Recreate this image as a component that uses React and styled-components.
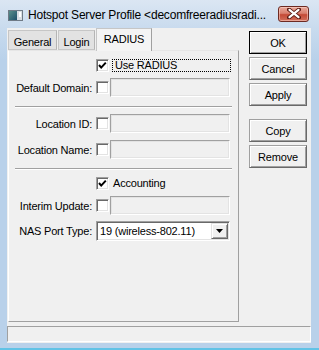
import React from "react";
import styled, { createGlobalStyle } from "styled-components";

const Global = createGlobalStyle`
  html, body { margin: 0; padding: 0; background: #fff; }
  body { font-family: "Liberation Sans", Arial, sans-serif; font-size: 11px; color: #000; }
`;

const UiFont = `"Liberation Sans", Arial, sans-serif`;

const Window = styled.div`
  width: 319px;
  height: 350px;
  box-sizing: border-box;
  display: flex;
  flex-direction: column;
  background: linear-gradient(#dbe6f3 0px, #c9dbee 28px, #b9d1ea 60px, #b9d1ea);
  border-bottom: 2px solid #62c3e6;
  font-family: ${UiFont};
`;

const TitleBar = styled.div`
  height: 28px;
  flex: none;
  display: flex;
  align-items: center;
  padding: 2px 10px 0 8px;
  box-sizing: border-box;
`;

const Title = styled.span`
  margin-left: 5px;
  font-size: 12px;
  letter-spacing: -0.2px;
  white-space: nowrap;
  flex: 1;
  overflow: hidden;
`;

const CloseButton = styled.div`
  width: 31px;
  height: 16px;
  flex: none;
  margin-top: -3px;
  box-sizing: border-box;
  border: 1px solid #6d2a22;
  border-radius: 3px;
  display: flex;
  align-items: center;
  justify-content: center;
  background: linear-gradient(#e9a99b 0%, #d9806f 45%, #c44a36 55%, #d2705c 100%);
  box-shadow: inset 0 0 0 1px rgba(255, 220, 210, 0.5);
`;

const Client = styled.div`
  height: 315px;
  margin: 0 8px 0 7px;
  background: #f0f0f0;
  display: flex;
  flex-direction: column;
`;

const Body = styled.div`
  height: 294px;
  display: flex;
  padding-left: 1px;
`;

const TabArea = styled.div`
  width: 231px;
  display: flex;
  flex-direction: column;
`;

const TabStrip = styled.div`
  height: 22px;
  display: flex;
  align-items: flex-end;
  position: relative;
  z-index: 1;
`;

const Tab = styled.div`
  width: ${({ $w }) => $w}px;
  height: ${({ $active }) => ($active ? 23 : 20)}px;
  margin-bottom: ${({ $active }) => ($active ? -1 : 0)}px;
  margin-right: 1px;
  box-sizing: border-box;
  border: 1px solid #c6c6c6;
  border-right-color: ${({ $active }) => ($active ? "#a0a0a0" : "#b5b5b5")};
  border-bottom: ${({ $active }) => ($active ? "none" : "1px solid #c6c6c6")};
  background: ${({ $active }) => ($active ? "#f4f4f4" : "#e2e2e2")};
  display: flex;
  justify-content: center;
  padding-top: ${({ $active }) => ($active ? 4 : 5)}px;
  font-size: 11px;
  line-height: 12px;
  letter-spacing: -0.2px;
`;

const Panel = styled.div`
  height: 272px;
  box-sizing: border-box;
  border: 1px solid #fff;
  border-right-color: #a0a0a0;
  border-bottom-color: #a0a0a0;
  border-top-color: #e6e6e6;
  display: flex;
  flex-direction: column;
`;

const Row = styled.div`
  height: ${({ $h }) => $h}px;
  margin-top: ${({ $mt }) => $mt}px;
  display: flex;
  align-items: center;
`;

const Label = styled.div`
  width: 83px;
  flex: none;
  text-align: right;
  font-size: 11px;
  letter-spacing: -0.2px;
  white-space: nowrap;
`;

const CheckBox = styled.div`
  width: 13px;
  height: 13px;
  flex: none;
  margin-left: 4px;
  box-sizing: border-box;
  background: #fff;
  border: 1px solid;
  border-color: #a0a0a0 #fff #fff #a0a0a0;
  box-shadow: inset 1px 1px #696969, inset -1px -1px #e3e3e3;
  display: flex;
  align-items: center;
  justify-content: center;
`;

const FocusLabel = styled.div`
  margin-left: 3px;
  width: 119px;
  height: 13px;
  box-sizing: border-box;
  border: 1px dotted #000;
  padding-left: 2px;
  font-size: 11px;
  line-height: 11px;
  letter-spacing: -0.2px;
`;

const CheckText = styled.div`
  margin-left: 4px;
  font-size: 11px;
  letter-spacing: -0.2px;
`;

const Field = styled.div`
  margin-left: 1px;
  width: 120px;
  height: 19px;
  box-sizing: border-box;
  background: #f0f0f0;
  border: 1px solid;
  border-color: #a0a0a0 #fff #fff #a0a0a0;
  box-shadow: inset 1px 1px #e3e3e3, inset -1px -1px #e3e3e3;
`;

const Separator = styled.div`
  margin: ${({ $mt }) => $mt}px 6px 0 6px;
  height: 0;
  border-top: 1px solid #a0a0a0;
  border-bottom: 1px solid #fff;
`;

const Combo = styled.div`
  margin-left: 4px;
  width: 134px;
  height: 20px;
  box-sizing: border-box;
  background: #fff;
  border: 1px solid;
  border-color: #a0a0a0 #fff #fff #a0a0a0;
  box-shadow: inset 1px 1px #696969, inset -1px -1px #e3e3e3;
  display: flex;
  align-items: center;
  padding: 2px 1px 2px 3px;
`;

const ComboText = styled.span`
  flex: 1;
  font-size: 11px;
  letter-spacing: -0.2px;
  white-space: nowrap;
`;

const ComboButton = styled.div`
  width: 17px;
  height: 16px;
  box-sizing: border-box;
  background: #f0f0f0;
  border: 1px solid;
  border-color: #e3e3e3 #696969 #696969 #e3e3e3;
  box-shadow: inset 1px 1px #fff, inset -1px -1px #a0a0a0;
  display: flex;
  align-items: center;
  justify-content: center;
`;

const ButtonColumn = styled.div`
  margin-left: 10px;
  padding-top: 3px;
  display: flex;
  flex-direction: column;
  gap: 3px;
`;

const Button = styled.div`
  width: 58px;
  height: 23px;
  margin-top: ${({ $mt }) => $mt || 0}px;
  box-sizing: border-box;
  background: #f0f0f0;
  border: 1px solid;
  border-color: ${({ $default }) =>
    $default ? "#000" : "#a0a0a0 #696969 #696969 #a0a0a0"};
  box-shadow: inset 1px 1px #fff, inset -1px -1px #a0a0a0;
  display: flex;
  align-items: center;
  justify-content: center;
  font-size: 11px;
  letter-spacing: -0.2px;
`;

const StatusBar = styled.div`
  margin-top: 4px;
  height: 16px;
  box-sizing: border-box;
  border: 1px solid;
  border-color: #a0a0a0 #fff #fff #a0a0a0;
`;

const Check = ({ checked }) => (
  <CheckBox>
    {checked && (
      <svg width="11" height="11" viewBox="0 0 11 11">
        <polyline points="2,5 4.2,7.6 8.8,2.6" fill="none" stroke="#000" strokeWidth="2" />
      </svg>
    )}
  </CheckBox>
);

const WindowIcon = () => (
  <svg width="15" height="11" viewBox="0 0 15 11">
    <defs>
      <linearGradient id="ig" x1="0" y1="0" x2="1" y2="1">
        <stop offset="0" stopColor="#5a8f8a" />
        <stop offset="1" stopColor="#1e4f6a" />
      </linearGradient>
    </defs>
    <rect x="0.5" y="0.5" width="14" height="10" fill="#d8dde3" stroke="#6f7a86" />
    <rect x="1" y="1" width="8" height="9" fill="url(#ig)" />
    <rect x="11" y="2" width="2" height="5" fill="#fff" />
  </svg>
);

const CloseGlyph = () => (
  <svg width="14" height="11" viewBox="0 0 14 11">
    <path d="M2 1.5 L12 9.5 M12 1.5 L2 9.5" stroke="#5a1a12" strokeWidth="4" strokeLinecap="round" />
    <path d="M2.5 1.8 L11.5 9.2 M11.5 1.8 L2.5 9.2" stroke="#fff" strokeWidth="2.2" strokeLinecap="round" />
  </svg>
);

const DropArrow = () => (
  <svg width="7" height="4" viewBox="0 0 7 4">
    <path d="M0 0H7L3.5 4Z" fill="#000" />
  </svg>
);

const ProfileDialog = () => {
  return (
    <Window>
      <TitleBar>
        <WindowIcon />
        <Title>Hotspot Server Profile &lt;decomfreeradiusradi...</Title>
        <CloseButton>
          <CloseGlyph />
        </CloseButton>
      </TitleBar>
      <Client>
        <Body>
          <TabArea>
            <TabStrip>
              <Tab $w={49}>General</Tab>
              <Tab $w={37}>Login</Tab>
              <Tab $w={56} $active>
                RADIUS
              </Tab>
            </TabStrip>
            <Panel>
              <Row $h={16} $mt={6}>
                <Label />
                <Check checked />
                <FocusLabel>Use RADIUS</FocusLabel>
              </Row>
              <Row $h={19} $mt={5}>
                <Label>Default Domain:</Label>
                <Check />
                <Field />
              </Row>
              <Separator $mt={9} />
              <Row $h={19} $mt={6}>
                <Label>Location ID:</Label>
                <Check />
                <Field />
              </Row>
              <Row $h={19} $mt={7}>
                <Label>Location Name:</Label>
                <Check />
                <Field />
              </Row>
              <Separator $mt={9} />
              <Row $h={16} $mt={5}>
                <Label />
                <Check checked />
                <CheckText>Accounting</CheckText>
              </Row>
              <Row $h={19} $mt={5}>
                <Label>Interim Update:</Label>
                <Check />
                <Field />
              </Row>
              <Row $h={20} $mt={6}>
                <Label>NAS Port Type:</Label>
                <Combo>
                  <ComboText>19 (wireless-802.11)</ComboText>
                  <ComboButton>
                    <DropArrow />
                  </ComboButton>
                </Combo>
              </Row>
            </Panel>
          </TabArea>
          <ButtonColumn>
            <Button $default>OK</Button>
            <Button>Cancel</Button>
            <Button>Apply</Button>
            <Button $mt={10}>Copy</Button>
            <Button>Remove</Button>
          </ButtonColumn>
        </Body>
        <StatusBar />
      </Client>
    </Window>
  );
};

const App = () => (
  <>
    <Global />
    <ProfileDialog />
  </>
);

export default App;
